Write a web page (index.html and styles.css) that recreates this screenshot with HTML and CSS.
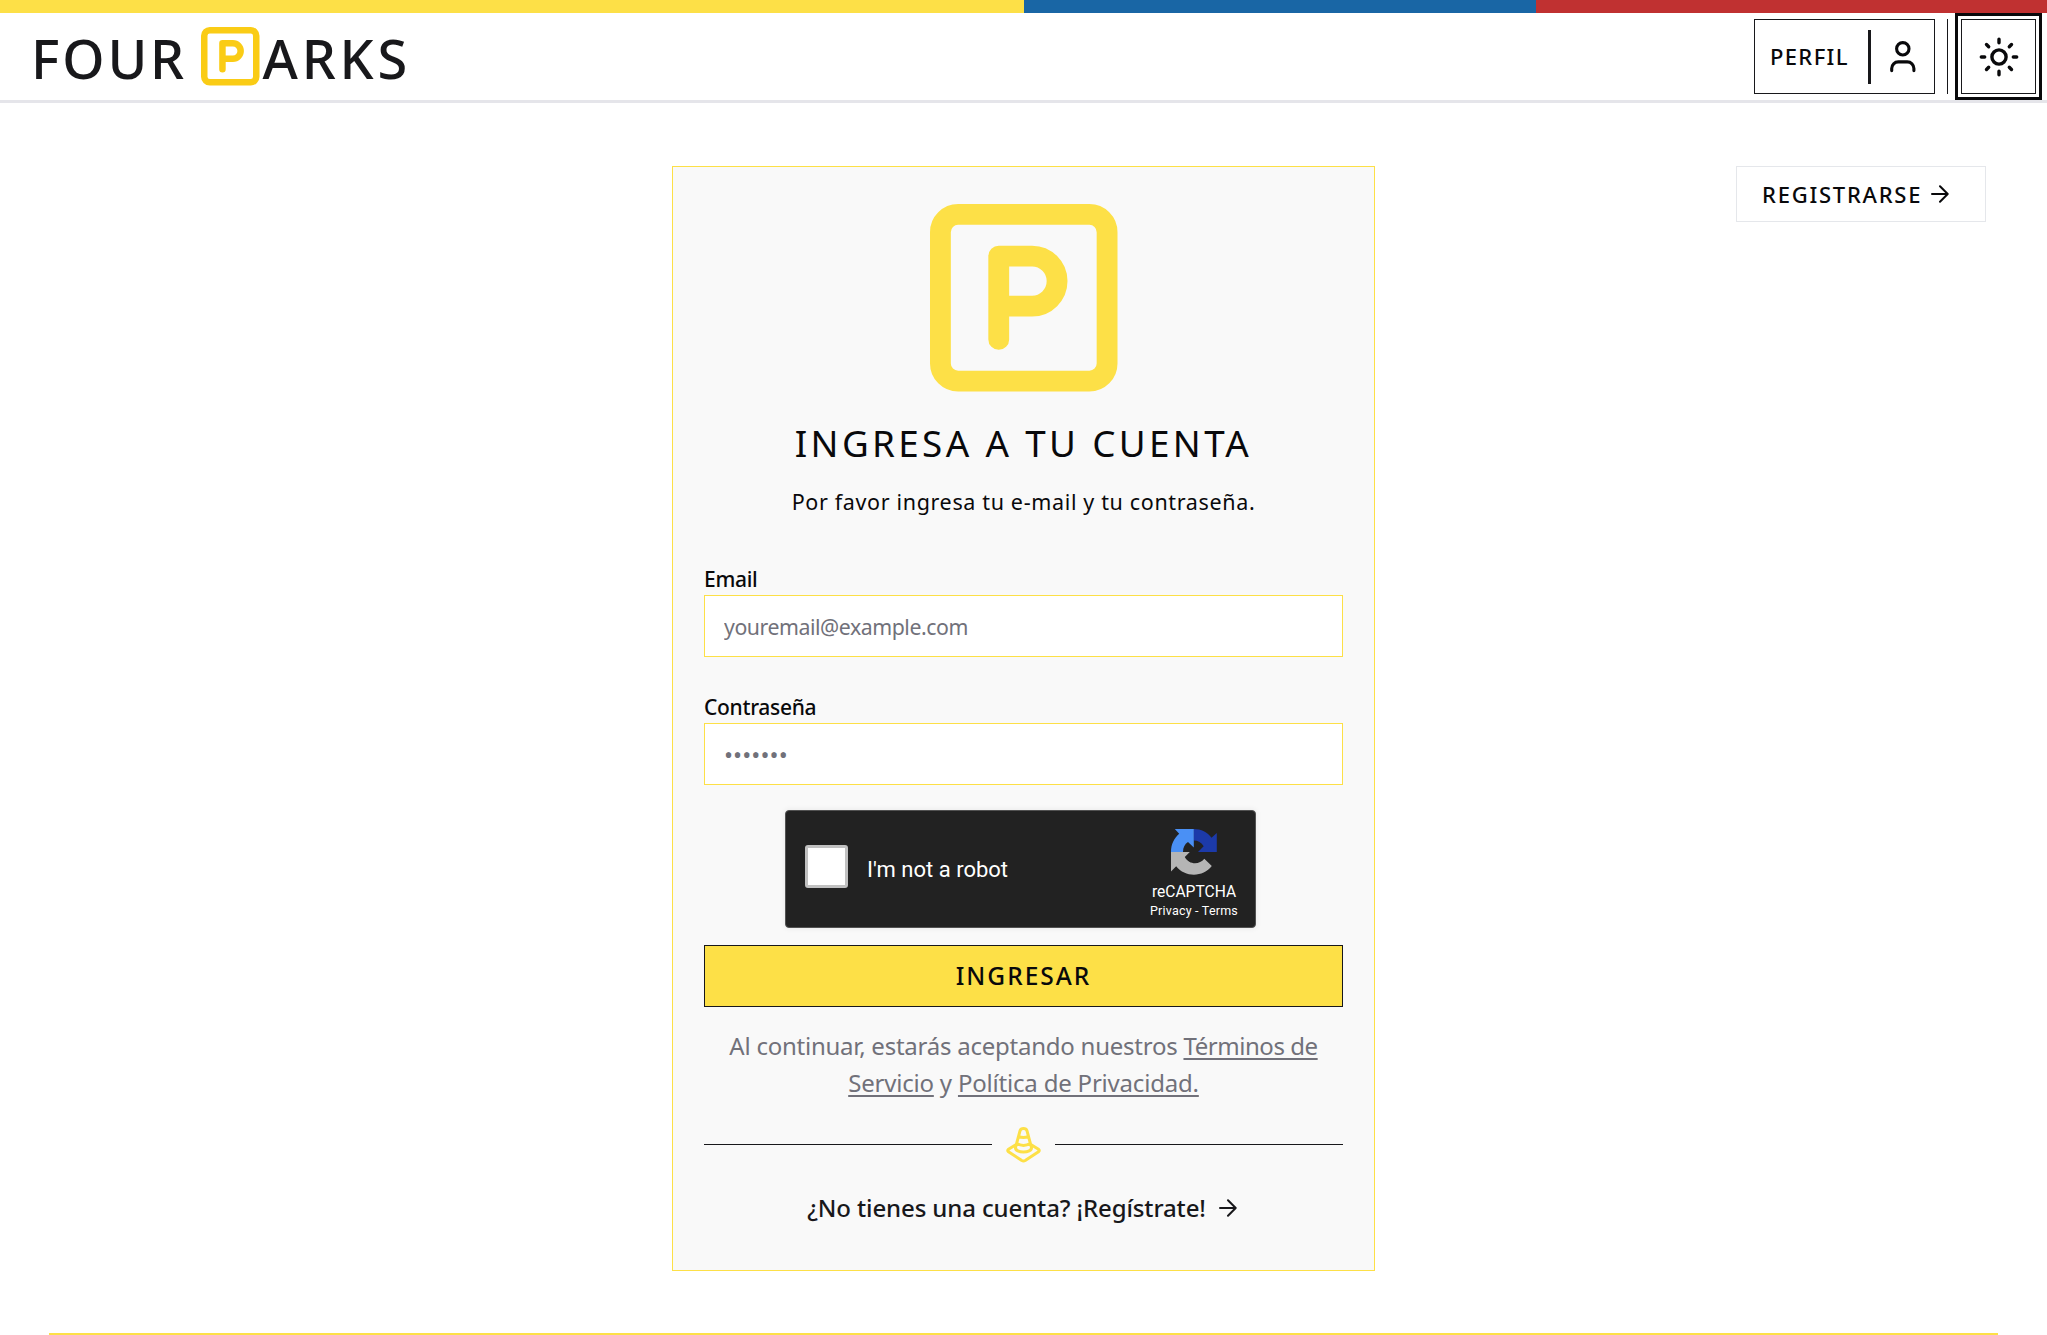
FILE: index.html
```html
<!DOCTYPE html>
<html lang="es">
<head>
<meta charset="utf-8">
<title>Four Parks</title>
<link rel="stylesheet" href="styles.css">
</head>
<body>
<div class="flag"><i class="flag-yellow"></i><i class="flag-blue"></i><i class="flag-red"></i></div>
<header class="header">
  <a class="logo"><span class="logo-four">FOUR</span>
    <svg class="logo-mark" viewBox="3 3 18 18" fill="none" stroke="currentColor" stroke-width="2" stroke-linecap="round" stroke-linejoin="round"><rect x="4" y="4" width="16" height="16" rx="1.7"/><path d="M9.6 16V8h3.2a2.4 2.4 0 0 1 0 4.8H9.6"/></svg>
    <span class="logo-arks">ARKS</span></a>
  <nav class="nav">
    <button class="profile"><span class="profile-label">PERFIL</span><i class="profile-bar"></i>
      <svg width="26" height="32" viewBox="0 0 26 32" fill="none" stroke="currentColor" stroke-width="3.100" stroke-linecap="round"><circle cx="12.800" cy="7.800" r="6.200"/><path d="M1.700 29.600V27.500a6.600 6.600 0 0 1 6.600-6.600h9a6.600 6.600 0 0 1 6.600 6.600v2.100"/></svg>
    </button>
    <i class="nav-line"></i>
    <button class="theme">
      <svg width="40" height="40" viewBox="-20 -20 40 40" fill="none" stroke="currentColor" stroke-width="3.400" stroke-linecap="round"><circle r="7.100"/><path d="M0-17.700v3.400M0 17.700v-3.400M-17.700 0h3.400M17.700 0h-3.400M-12.500-12.500l2.200 2.200M12.500-12.500l-2.200 2.200M-12.500 12.500l2.200-2.200M12.500 12.500l-2.200-2.200"/></svg>
    </button>
  </nav>
</header>
<main class="main">
  <section class="card">
    <svg class="card-mark" viewBox="3 3 18 18" fill="none" stroke="currentColor" stroke-width="2" stroke-linecap="round" stroke-linejoin="round"><rect x="4" y="4" width="16" height="16" rx="1.7"/><path d="M9.6 16V8h3.2a2.4 2.4 0 0 1 0 4.8H9.6"/></svg>
    <h1 class="title">INGRESA A TU CUENTA</h1>
    <p class="subtitle">Por favor ingresa tu e-mail y tu contraseña.</p>
    <label class="label" for="email">Email</label>
    <input class="input" id="email" type="email" placeholder="youremail@example.com">
    <label class="label label-password" for="password">Contraseña</label>
    <input class="input input-password" id="password" type="password" placeholder="•••••••">
    <div class="captcha">
      <span class="captcha-box"></span>
      <span class="captcha-text">I'm not a robot</span>
      <div class="captcha-brand">
        <svg width="46" height="46" viewBox="0 0 46 46"><path fill="#1c3aa9" d="M22.8 0C30 0 36.500 3.200 40.500 8.800L45.800 4V23H27l5.700-5.800C30.500 13.500 27 11.500 22.800 11.500Z"/><path fill="#4a90f5" d="M3.800 0H22.800V18.500L17 13C13.600 15.200 12 18.500 12 23H0C0 15.500 3 9.200 8.200 4.800Z"/><path fill="#b5b5b5" d="M0 23H18.800L13.800 28C18 36 28.500 36 33.300 29.800L40.800 37C32 48.500 14 48.500 5.200 37.200L0 42.500Z"/></svg>
        <span class="captcha-name">reCAPTCHA</span>
        <span class="captcha-links">Privacy - Terms</span>
      </div>
    </div>
    <button class="submit">INGRESAR</button>
    <p class="terms"><span class="terms-first">Al continuar, estarás aceptando nuestros <a>Términos de</a></span><br><a>Servicio</a> y <a>Política de Privacidad.</a></p>
    <div class="divider"><i></i>
      <svg width="36" height="36" viewBox="0 0 36 36" fill="none" stroke="currentColor" stroke-width="3" stroke-linecap="round" stroke-linejoin="round"><path d="M9.500 20.600 14 3.800Q14.800 1.600 17.500 1.600T21 3.800L25.500 20.600C26.100 26.400 8.900 26.400 9.500 20.600ZM12.800 9.700Q17.500 11.500 22.200 9.700M10.800 16.500Q17.500 20.300 24.200 16.500"/><path d="M9 18.200 2.500 22.300Q.9 23.500 2.500 24.800L15.800 33.500Q17.500 34.500 19.200 33.500L32.500 24.800Q34.100 23.500 32.500 22.300L26 18.200"/></svg>
      <i></i></div>
    <a class="signup">¿No tienes una cuenta? ¡Regístrate!<svg width="18" height="18" viewBox="0 0 18 18" fill="none" stroke="currentColor" stroke-width="2" stroke-linecap="round" stroke-linejoin="round"><path d="M1 9h15.500M9 1.200 16.700 9 9 16.800"/></svg></a>
  </section>
  <a class="register">REGISTRARSE<svg width="18" height="18" viewBox="0 0 18 18" fill="none" stroke="currentColor" stroke-width="2" stroke-linecap="round" stroke-linejoin="round"><path d="M1 9h15.500M9 1.200 16.700 9 9 16.800"/></svg></a>
</main>
<footer class="footer"></footer>
</body>
</html>
```
FILE: styles.css
```css
* { box-sizing: border-box; margin: 0; padding: 0; }
html, body { height: 1335px; overflow: hidden; }
body { font-family: "Noto Sans", "Open Sans", sans-serif; background: #fff; color: #09090b; }
svg { display: block; flex: none; }
button { font: inherit; color: inherit; background: #fff; }

.flag { display: flex; height: 13px; }
.flag-yellow { flex: 0 0 1024px; background: #fde047; }
.flag-blue { flex: 0 0 512px; background: #1966a5; }
.flag-red { flex: 1; background: #c03131; }

.header { display: flex; justify-content: space-between; height: 90px; padding: 0 11px 0 31px; border-bottom: 3px solid #e5e5ea; }
.logo { display: flex; align-items: flex-start; padding-top: 14px; color: #18181b; font-size: 54px; font-weight: 500; line-height: 62px; }
.logo-four { width: 170px; letter-spacing: 2.8px; }
.logo-mark { width: 58.5px; height: 58.5px; color: #facc15; }
.logo-arks { margin-left: 3px; letter-spacing: 3.8px; }
.nav { display: flex; align-items: flex-start; padding-top: 6px; }
.profile { display: flex; align-items: center; width: 181px; height: 75px; padding-left: 15px; border: 1px solid #18181b; }
.profile-label { width: 98px; padding-bottom: 1px; text-align: left; font-size: 22px; font-weight: 500; letter-spacing: 1.35px; line-height: 30px; }
.profile-bar { width: 3px; height: 54px; margin-right: 19px; background: #18181b; }
.nav-line { width: 1px; height: 75px; margin: 0 13px 0 12px; background: #18181b; }
.theme { display: flex; align-items: center; justify-content: center; width: 75px; height: 75px; border: 1px solid #18181b; box-shadow: 0 0 0 3px #fff, 0 0 0 6px #09090b; }

.main { display: grid; grid-template-columns: 672px 703px 1fr; align-items: start; height: 1230px; padding-top: 63px; }
.card { grid-column: 2; display: flex; flex-direction: column; align-items: stretch; height: 1105px; padding: 37px 31px 0; border: 1px solid #fde047; background: #f9f9f9; }
.card-mark { width: 187.5px; height: 187.5px; margin-left: 226px; color: #fde047; }
.title { margin-top: 26.5px; text-align: center; font-size: 36.8px; font-weight: 400; line-height: 50px; letter-spacing: 3.35px; }
.subtitle { margin: 19px 0 48px; text-align: center; font-size: 21.5px; font-weight: 400; line-height: 30px; letter-spacing: .65px; }
.label { height: 30px; font-size: 21px; font-weight: 500; line-height: 28px; letter-spacing: -.3px; }
.label-password { margin-top: 36px; }
.input { width: 639px; height: 62px; padding: 0 19px; border: 1px solid #fde047; background: #fff; font: 400 21.3px "Noto Sans", sans-serif; letter-spacing: -.45px; outline: 0; }
.input::placeholder { color: #71717a; opacity: 1; }
.input-password { padding-top: 1px; font-size: 24px; letter-spacing: .1px; }

.captcha { display: flex; align-items: flex-start; width: 471px; height: 118px; margin: 25px 0 0 81px; padding-left: 19px; border: 1px solid #525252; border-radius: 4px; background: #222; box-shadow: 0 0 6px rgba(0,0,0,.08); color: #fff; font-family: Roboto, sans-serif; }
.captcha-box { width: 43px; height: 43px; margin-top: 34px; border: 3px solid #c1c1c1; border-radius: 3px; background: #fff; }
.captcha-text { width: 279px; margin: 44px 0 0 19px; font-size: 22px; line-height: 30px; }
.captcha-brand { display: flex; flex-direction: column; align-items: center; width: 96px; padding-top: 18px; }
.captcha-name { margin-top: 7px; font-size: 15.6px; line-height: 20px; }
.captcha-links { font-size: 12.5px; line-height: 18px; letter-spacing: .2px; white-space: nowrap; }

.submit { height: 62px; margin-top: 17px; border: 1px solid #18181b; background: #fde047; font-size: 24.5px; font-weight: 500; line-height: 34px; letter-spacing: 2px; }
.terms { margin-top: 20px; text-align: center; color: #71717a; font-size: 24px; line-height: 37.3px; letter-spacing: -.2px; white-space: nowrap; }
.terms-first { letter-spacing: -.24px; }
.terms-first a { letter-spacing: -.45px; }
.terms a { text-decoration: underline; text-decoration-thickness: 2px; text-underline-offset: 3px; }
.divider { display: flex; align-items: center; justify-content: space-between; height: 36px; margin-top: 25px; color: #fde047; }
.divider i { width: 288px; height: 1px; background: #18181b; }
.signup { display: flex; align-items: center; justify-content: center; gap: 13px; margin-top: 27px; padding-right: 3px; color: #18181b; font-size: 24px; font-weight: 500; line-height: 36px; letter-spacing: -.12px; }

.register { display: flex; align-items: center; gap: 9px; width: 250px; height: 56px; margin-left: 361px; padding-left: 25px; border: 1px solid #e5e7eb; font-size: 22px; font-weight: 500; line-height: 30px; letter-spacing: 1.75px; }
.footer { height: 2px; margin: 0 49px; background: #fde047; }
```
